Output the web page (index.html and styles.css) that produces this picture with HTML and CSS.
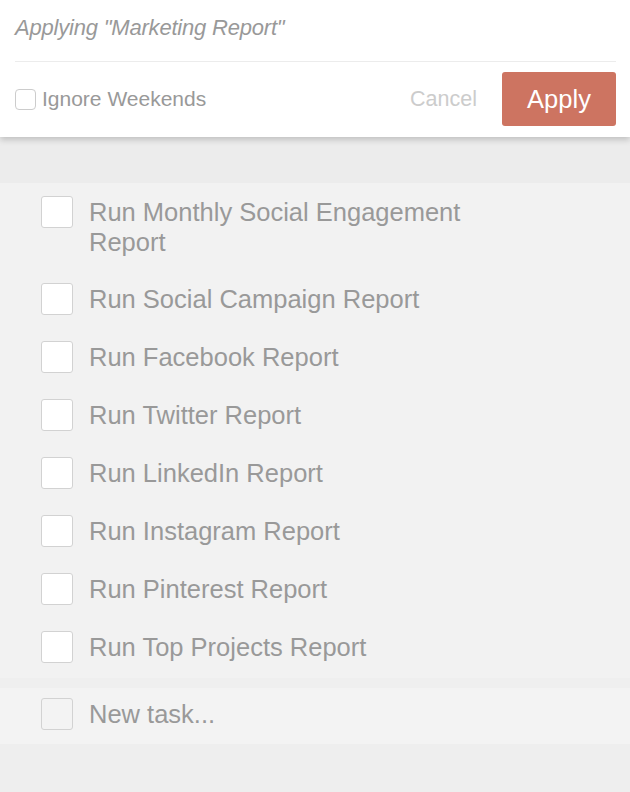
FILE: index.html
```html
<!DOCTYPE html>
<html>
<head>
<meta charset="utf-8">
<link rel="stylesheet" href="styles.css">
</head>
<body>
<div class="panel">
  <div class="title">Applying "Marketing Report"</div>
  <div class="actions">
    <label class="ignore"><span class="small-box"></span><span>Ignore Weekends</span></label>
    <div class="buttons">
      <span class="cancel">Cancel</span>
      <span class="apply">Apply</span>
    </div>
  </div>
</div>
<div class="spacer"></div>
<div class="list">
  <div class="item"><span class="box"></span><span class="label">Run Monthly Social Engagement Report</span></div>
  <div class="item"><span class="box"></span><span class="label">Run Social Campaign Report</span></div>
  <div class="item"><span class="box"></span><span class="label">Run Facebook Report</span></div>
  <div class="item"><span class="box"></span><span class="label">Run Twitter Report</span></div>
  <div class="item"><span class="box"></span><span class="label">Run LinkedIn Report</span></div>
  <div class="item"><span class="box"></span><span class="label">Run Instagram Report</span></div>
  <div class="item"><span class="box"></span><span class="label">Run Pinterest Report</span></div>
  <div class="item"><span class="box"></span><span class="label">Run Top Projects Report</span></div>
</div>
<div class="band"></div>
<div class="new-task">
  <div class="item"><span class="box empty"></span><span class="label">New task...</span></div>
</div>
</body>
</html>
```

FILE: styles.css
```css
html, body {
  margin: 0;
  padding: 0;
}
body {
  background: #eeeeee;
  font-family: "Liberation Sans", Arial, Helvetica, sans-serif;
  color: #9a9a9a;
  width: 630px;
  height: 792px;
  overflow: hidden;
}
.panel {
  background: #ffffff;
  padding: 0 14px 11px 15px;
  box-shadow: 0 3px 6px rgba(0, 0, 0, 0.18);
  position: relative;
  z-index: 1;
}
.title {
  font-style: italic;
  font-size: 22px;
  line-height: 26px;
  padding: 15px 0 20px;
  border-bottom: 1px solid #ececec;
  color: #999999;
  letter-spacing: -0.2px;
}
.actions {
  margin-top: 10px;
  display: flex;
  align-items: center;
  justify-content: space-between;
}
.ignore {
  display: flex;
  align-items: center;
  gap: 6px;
  font-size: 21px;
  color: #999999;
}
.small-box {
  width: 19px;
  height: 19px;
  border: 1px solid #cccccc;
  border-radius: 4px;
  background: #fff;
}
.buttons {
  display: flex;
  align-items: center;
  gap: 25px;
}
.cancel {
  font-size: 21.5px;
  color: #cccccc;
}
.apply {
  display: flex;
  align-items: center;
  justify-content: center;
  width: 114px;
  height: 54px;
  background: #cd7461;
  border-radius: 3px;
  color: #ffffff;
  font-size: 25.5px;
}
.spacer {
  height: 46px;
  background: #ececec;
}
.list {
  background: #f2f2f2;
  padding: 13px 0 15px 41px;
  display: flex;
  flex-direction: column;
  gap: 26px;
}
.item {
  display: flex;
  align-items: flex-start;
  gap: 16px;
}
.box {
  flex: none;
  width: 30px;
  height: 30px;
  border: 1px solid #d2d2d2;
  border-radius: 3px;
  background: #ffffff;
}
.box.empty {
  background: transparent;
}
.label {
  font-size: 25.5px;
  line-height: 30px;
  margin-top: 1px;
  max-width: 420px;
  color: #999999;
}
.band {
  height: 10px;
  background: #efefef;
}
.new-task {
  background: #f3f3f3;
  padding: 10px 0 14px 41px;
}
```
